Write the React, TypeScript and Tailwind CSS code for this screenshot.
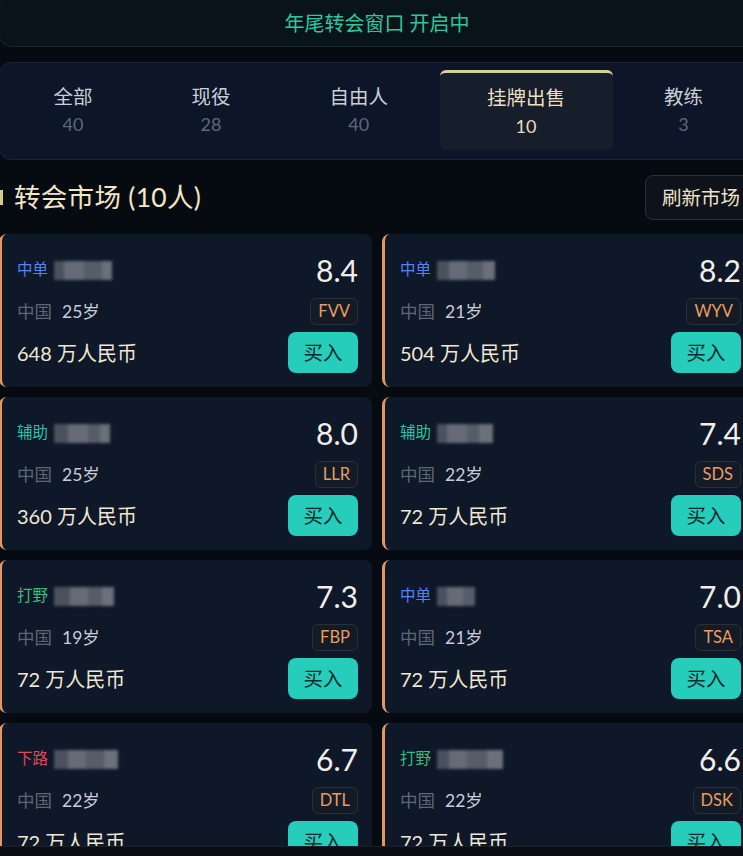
import React from "react";

type Player = {
  role: string;
  roleColor: string;
  rating: string;
  age: string;
  tag: string;
  price: string;
  blur: number[];
};

const players: Player[] = [
  { role: "中单", roleColor: "text-[#5384f2]", rating: "8.4", age: "25岁", tag: "FVV", price: "648", blur: [10, 20, 18, 10] },
  { role: "中单", roleColor: "text-[#5384f2]", rating: "8.2", age: "21岁", tag: "WYV", price: "504", blur: [12, 18, 16, 12] },
  { role: "辅助", roleColor: "text-[#2cc2a6]", rating: "8.0", age: "25岁", tag: "LLR", price: "360", blur: [14, 20, 12, 10] },
  { role: "辅助", roleColor: "text-[#2cc2a6]", rating: "7.4", age: "22岁", tag: "SDS", price: "72", blur: [10, 20, 12, 14] },
  { role: "打野", roleColor: "text-[#3bbd7c]", rating: "7.3", age: "19岁", tag: "FBP", price: "72", blur: [16, 18, 14, 12] },
  { role: "中单", roleColor: "text-[#5384f2]", rating: "7.0", age: "21岁", tag: "TSA", price: "72", blur: [10, 16, 12] },
  { role: "下路", roleColor: "text-[#e0485a]", rating: "6.7", age: "22岁", tag: "DTL", price: "72", blur: [14, 18, 18, 14] },
  { role: "打野", roleColor: "text-[#3bbd7c]", rating: "6.6", age: "22岁", tag: "DSK", price: "72", blur: [12, 18, 20, 16] },
];

const tabs = [
  { label: "全部", count: "40" },
  { label: "现役", count: "28" },
  { label: "自由人", count: "40" },
  { label: "挂牌出售", count: "10", active: true },
  { label: "教练", count: "3" },
];

const blurShades = ["bg-[#4b515d]", "bg-[#666b77]", "bg-[#565c68]", "bg-[#6b707b]"];

function Card({ p }: { p: Player }) {
  return (
    <div className="h-[153px] rounded-lg border-l-[3px] border-l-[#e3985f] bg-[#0f1829] pl-[15px] pr-[14px] pt-[18px] pb-[14px] flex flex-col">
      <div className="h-[36px] flex items-center justify-between">
        <div className="flex items-center gap-[6px]">
          <span className={`text-[15.5px] leading-none ${p.roleColor}`}>{p.role}</span>
          <div className="flex items-center blur-[1.5px]">
            {p.blur.map((w, i) => (
              <div key={i} style={{ width: w }} className={`h-[19px] ${blurShades[i % blurShades.length]}`} />
            ))}
          </div>
        </div>
        <span className="text-[30px] leading-none text-[#f1efe9]">{p.rating}</span>
      </div>
      <div className="mt-[10px] h-[27px] flex items-center justify-between">
        <div className="flex items-center gap-[10px] text-[17.5px] leading-none">
          <span className="text-[#5f6673]">中国</span>
          <span className="text-[#c9ccd6]">{p.age}</span>
        </div>
        <span className="h-[27px] px-[7px] flex items-center rounded-md border border-[#2a303a] bg-[#141b26] text-[16.5px] leading-none text-[#e79d62]">
          {p.tag}
        </span>
      </div>
      <div className="mt-[7px] h-[41px] flex items-center justify-between">
        <span className="text-[20px] leading-none text-[#efe7d0]">{p.price} 万人民币</span>
        <button className="w-[70px] h-[41px] rounded-lg bg-[#27cdbb] text-[19.5px] leading-none text-[#0f2a2b]">
          买入
        </button>
      </div>
    </div>
  );
}

export default function App() {
  return (
    <div
      className="w-[743px] h-[856px] overflow-hidden bg-[#060b12] flex flex-col"
      style={{ fontFamily: '"Lato", "Noto Sans CJK SC", "Noto Sans", sans-serif' }}
    >
      <div className="h-[846px] overflow-hidden">
        <div className="w-[756px] ml-[-1px] flex flex-col">
          <div className="mt-[-8px] h-[55px] rounded-xl border border-[#18262d] bg-[#08131a] flex items-center justify-center pt-[6px]">
            <span className="text-[20px] leading-none text-[#2dc69f]">年尾转会窗口 开启中</span>
          </div>

          <div className="mt-[15px] h-[98px] overflow-hidden rounded-xl border border-[#1b2536] bg-[#0d1628] px-[6px] pt-[7px] flex items-start gap-[4px]">
            {tabs.map((t) => (
              <div
                key={t.label}
                className={`shrink-0 whitespace-nowrap h-[80px] px-[47.5px] flex flex-col items-center justify-center rounded-md ${
                  t.active ? "bg-[#161d2b] border-t-[3px] border-t-[#d9cd9a]" : ""
                }`}
              >
                <span className={`text-[19.5px] leading-none ${t.active ? "text-[#eadfc2]" : "text-[#c9ced8]"}`}>{t.label}</span>
                <span className={`mt-[9px] text-[18px] leading-none ${t.active ? "text-[#e7dcbd]" : "text-[#5c677c]"}`}>{t.count}</span>
              </div>
            ))}
          </div>

          <div className="mt-[15px] h-[45px] flex items-center justify-between">
            <div className="flex items-center gap-[11px]">
              <div className="w-[4px] h-[15px] bg-[#d9c98f]" />
              <span className="text-[26.5px] leading-none text-[#f2e6c3] tracking-[0.3px]">转会市场 (10人)</span>
            </div>
            <button className="h-[45px] w-[110px] rounded-lg border border-[#2a313d] bg-[#0d121b] text-[19.5px] leading-none text-[#ede3c6] text-left pl-[16px] whitespace-nowrap">
              刷新市场
            </button>
          </div>

          <div className="mt-[14px] grid grid-cols-2 gap-x-[10px] gap-y-[10px]">
            {players.map((p, i) => (
              <Card key={i} p={p} />
            ))}
          </div>
        </div>
      </div>
      <div className="h-[10px] border-t border-[#1c2029] bg-[#0a0d12]" />
    </div>
  );
}
